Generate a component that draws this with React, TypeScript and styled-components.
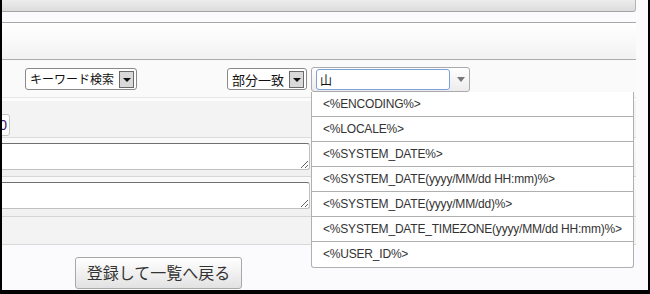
import React from "react";
import styled, { createGlobalStyle } from "styled-components";

const GlobalStyle = createGlobalStyle`
  html, body {
    margin: 0;
    padding: 0;
    background: #000;
  }
  body {
    font-family: "Liberation Sans", Arial, "Noto Sans CJK JP", sans-serif;
    color: #333;
  }
`;

const tags = [
  "<%ENCODING%>",
  "<%LOCALE%>",
  "<%SYSTEM_DATE%>",
  "<%SYSTEM_DATE(yyyy/MM/dd HH:mm)%>",
  "<%SYSTEM_DATE(yyyy/MM/dd)%>",
  "<%SYSTEM_DATE_TIMEZONE(yyyy/MM/dd HH:mm)%>",
  "<%USER_ID%>",
];

const App = () => {
  return (
    <Frame>
      <GlobalStyle />
      <Screen>
        <Content>
          <TopBar />
          <Gap />
          <SectionHeader />
          <SearchRow>
            <Select width={112}>
              <SelectText size={12}>キーワード検索</SelectText>
              <ArrowButton />
            </Select>
            <Select width={80} style={{ marginLeft: 90 }}>
              <SelectText size={13}>部分一致</SelectText>
              <ArrowButton />
            </Select>
            <Combo>
              <ComboInput defaultValue="山" />
              <ComboArrow />
              <DropList>
                {tags.map((t) => (
                  <DropItem key={t}>{t}</DropItem>
                ))}
              </DropList>
            </Combo>
          </SearchRow>
          <RowGap />
          <NumberRow>
            <NumInput defaultValue="0" />
          </NumberRow>
          <TextRow>
            <TextBox />
          </TextRow>
          <TextRow last>
            <TextBox />
          </TextRow>
          <EmptyRow />
          <Footer>
            <BackButton>登録して一覧へ戻る</BackButton>
          </Footer>
        </Content>
      </Screen>
    </Frame>
  );
};

export default App;

const Frame = styled.div`
  width: 650px;
  height: 294px;
  box-sizing: border-box;
  padding: 0 2px 4px 2px;
  background: #000;
`;

const Screen = styled.div`
  height: 290px;
  background: #fbfbfd;
  overflow: hidden;
`;

const Content = styled.div`
  width: 634px;
`;

const TopBar = styled.div`
  height: 11px;
  background: linear-gradient(#ececec, #dcdcdc);
  border-bottom: 1px solid #a4a4a4;
  border-right: 1px solid #b4b4b4;
  border-bottom-right-radius: 3px;
`;

const Gap = styled.div`
  height: 10px;
`;

const SectionHeader = styled.div`
  height: 36px;
  border-top: 1px solid #a8a8a8;
  border-bottom: 1px solid #acacac;
  background: linear-gradient(#ffffff, #f2f2f2);
`;

const SearchRow = styled.div`
  height: 38px;
  box-sizing: border-box;
  padding: 8px 0 0 23px;
  display: flex;
  align-items: flex-start;
  background: #fafafa;
  border-bottom: 1px solid #e6e6e6;
`;

const Select = styled.div<{ width: number }>`
  width: ${(p) => p.width}px;
  height: 22px;
  box-sizing: border-box;
  border: 1px solid #8a8a8a;
  border-radius: 3px;
  background: #fff;
  display: flex;
  align-items: center;
  justify-content: space-between;
  padding: 0 2px 0 4px;
`;

const SelectText = styled.span<{ size: number }>`
  font-family: "Noto Sans CJK JP", sans-serif;
  font-size: ${(p) => p.size}px;
  color: #111;
  white-space: nowrap;
  line-height: 1;
`;

const ArrowButton = styled.span`
  width: 15px;
  height: 17px;
  box-sizing: border-box;
  border: 1px solid #6a6a6a;
  background: #d9d9d9;
  display: flex;
  align-items: center;
  justify-content: center;
  &::after {
    content: "";
    border-left: 4px solid transparent;
    border-right: 4px solid transparent;
    border-top: 4px solid #111;
    margin-top: 1px;
  }
`;

const Combo = styled.div`
  position: relative;
  margin: -1px 0 0 4px;
  width: 159px;
  height: 25px;
  box-sizing: border-box;
  border: 1px solid #aaa;
  border-radius: 3px;
  background: linear-gradient(#ffffff, #ececec);
  display: flex;
  align-items: center;
  padding-left: 4px;
`;

const ComboInput = styled.input`
  width: 134px;
  height: 21px;
  box-sizing: border-box;
  border: 1px solid #7f9fd8;
  border-radius: 3px;
  background: #fff;
  padding: 0 3px;
  font-family: "Noto Sans CJK JP", sans-serif;
  font-size: 12px;
  color: #111;
  outline: none;
`;

const ComboArrow = styled.span`
  margin-left: 7px;
  border-left: 4px solid transparent;
  border-right: 4px solid transparent;
  border-top: 5px solid #777;
`;

const DropList = styled.ul`
  position: absolute;
  top: 24px;
  left: -1px;
  width: 323px;
  margin: 0;
  padding: 0;
  list-style: none;
  box-sizing: border-box;
  border: 1px solid #b0b0b0;
  border-top: none;
  border-radius: 0 0 3px 3px;
  background: #fff;
  z-index: 2;
`;

const DropItem = styled.li`
  height: 25px;
  box-sizing: border-box;
  padding: 0 0 1px 11px;
  display: flex;
  align-items: center;
  font-size: 12px;
  letter-spacing: -0.2px;
  color: #333;
  border-bottom: 1px solid #b0b0b0;
  &:last-child {
    border-bottom: none;
  }
`;

const RowGap = styled.div`
  height: 3px;
  background: #fcfcfc;
`;

const NumberRow = styled.div`
  height: 37px;
  box-sizing: border-box;
  padding-top: 13px;
  background: #f3f3f3;
  border-bottom: 1px solid #dcdcdc;
  overflow: hidden;
`;

const NumInput = styled.input`
  width: 40px;
  height: 22px;
  margin-left: -32px;
  box-sizing: border-box;
  border: 1px solid #c4c4c4;
  border-radius: 3px;
  background: #fff;
  text-align: right;
  padding: 0 2px 0 0;
  font-family: "Liberation Sans", Arial, sans-serif;
  font-size: 14px;
  color: #3a1a6a;
  outline: none;
  display: block;
`;

const TextRow = styled.div<{ last?: boolean }>`
  box-sizing: border-box;
  padding: ${(p) => (p.last ? "5px 0 7px" : "5px 0 6px")};
  background: linear-gradient(#fafafa, #f0f0f0);
  border-bottom: 1px solid #d6d6d6;
  overflow: hidden;
`;

const TextBox = styled.textarea`
  display: block;
  width: 400px;
  height: 27px;
  margin-left: -92px;
  box-sizing: border-box;
  border: 1px solid #c0c0c0;
  border-top-color: #707070;
  border-radius: 3px;
  background: #fff;
  resize: both;
  outline: none;
`;

const EmptyRow = styled.div`
  height: 27px;
  background: #f3f3f3;
  border-bottom: 1px solid #d8d8d8;
`;

const Footer = styled.div`
  padding: 12px 0 0 73px;
`;

const BackButton = styled.button`
  width: 167px;
  height: 32px;
  border: 1px solid #a8a8a8;
  border-radius: 3px;
  background: linear-gradient(#ffffff, #e2e2e2);
  font-family: "Noto Sans CJK JP", sans-serif;
  font-size: 16px;
  color: #333;
  padding: 0 0 2px;
  cursor: pointer;
`;
